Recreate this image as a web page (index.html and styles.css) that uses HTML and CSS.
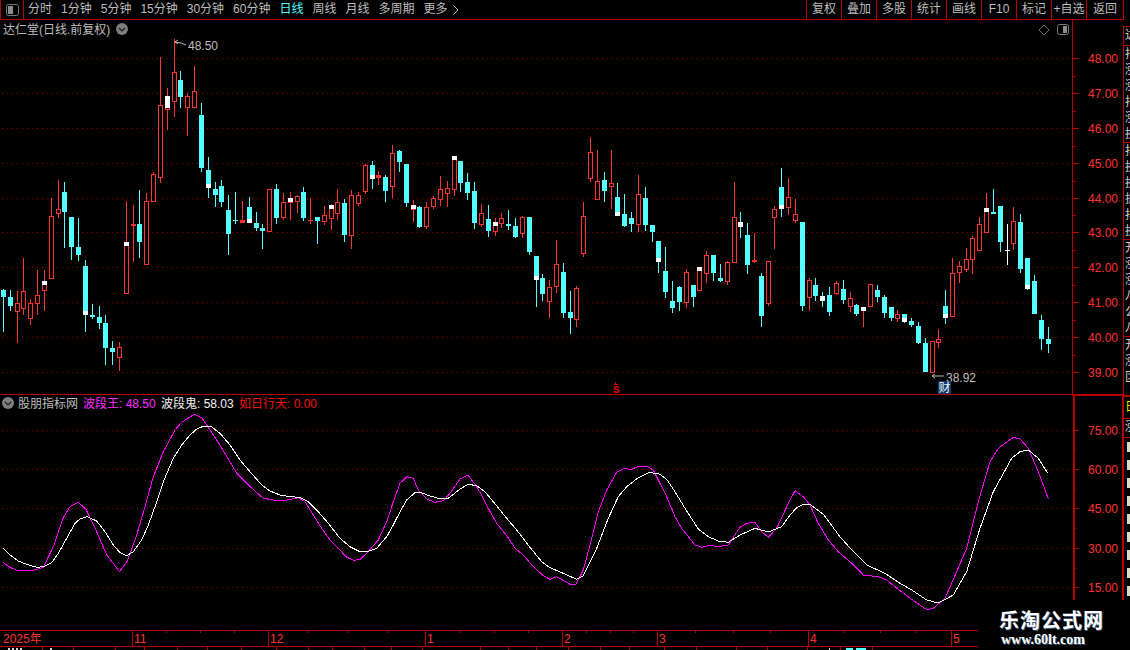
FILE: index.html
```html
<!DOCTYPE html>
<html lang="zh-CN">
<head>
<meta charset="utf-8">
<title>达仁堂 日线</title>
<link rel="stylesheet" href="styles.css">
</head>
<body>
<div class="app">
  <div class="main">
    <header class="toolbar">
      <button class="layout-btn" aria-label="布局">
        <svg class="layout-icon" width="13" height="12" viewBox="0 0 13 12"><rect x="0.5" y="0.5" width="12" height="11" rx="2" class="icon-frame"/><rect x="2" y="2" width="5" height="8" class="icon-fill"/></svg>
      </button>
      <nav class="periods">
        <span>分时</span><span>1分钟</span><span>5分钟</span><span>15分钟</span><span>30分钟</span><span>60分钟</span>
        <span class="active">日线</span><span>周线</span><span>月线</span><span>多周期</span>
        <span class="more">更多<svg class="chevron" width="6" height="10" viewBox="0 0 6 10"><path d="M0.5 0.5 L5 5 L0.5 9.5" /></svg></span>
      </nav>
      <div class="actions">
        <span>复权</span><span>叠加</span><span>多股</span><span>统计</span><span>画线</span><span class="f10">F10</span><span>标记</span><span>+自选</span><span class="last">返回</span>
      </div>
    </header>
    <svg id="plot" class="plot" width="1124" height="630" viewBox="0 20 1124 630">
      <g id="grid"></g>
      <g id="axes"></g>
      <g id="candles"></g>
      <g id="curves"></g>

      <text class="t-grey" x="3" y="34">达仁堂(日线.前复权)</text>
      <g class="round-icon" transform="translate(122 29)"><circle r="6"/><path d="M-3 -1 L0 2 L3 -1"/></g>
      <path class="diamond" d="M1044 25 L1049 30 L1044 35 L1039 30 Z"/>
      <rect class="toggle-frame" x="1057.5" y="24.5" width="11" height="10" rx="2"/>
      <rect class="toggle-fill" x="1063" y="26" width="4" height="7"/>

      <path class="marker" d="M175 42 L178 40 M175 42 L178 44 M175 42 L181 43 L186 45"/>
      <text class="t-grey" x="188" y="50">48.50</text>
      <path class="marker" d="M932 376 H944 M932 376 L935 374 M932 376 L935 378"/>
      <text class="t-grey" x="946" y="382">38.92</text>
      <rect class="badge" x="938" y="381" width="13" height="13"/>
      <text class="t-white" x="938.5" y="392">财</text>
      <path class="signal-cap" d="M615.5 382 V385 M614 384.5 H618"/>
      <text class="signal" x="613" y="393">S</text>

      <g class="round-icon" transform="translate(8 403)"><circle r="6"/><path d="M-3 -1 L0 2 L3 -1"/></g>
      <text class="t-grey" x="18" y="408">股朋指标网</text>
      <text class="t-magenta" x="83" y="408">波段王: 48.50</text>
      <text class="t-white" x="161" y="408">波段鬼: 58.03</text>
      <text class="t-red" x="239" y="408">如日行天: 0.00</text>

      <g class="t-axis">
        <text x="1088" y="63">48.00</text><text x="1088" y="98">47.00</text><text x="1088" y="133">46.00</text>
        <text x="1088" y="168">45.00</text><text x="1088" y="203">44.00</text><text x="1088" y="237">43.00</text>
        <text x="1088" y="272">42.00</text><text x="1088" y="307">41.00</text><text x="1088" y="342">40.00</text>
        <text x="1088" y="377">39.00</text>
        <text x="1088" y="435">75.00</text><text x="1088" y="474">60.00</text><text x="1088" y="513">45.00</text>
        <text x="1088" y="553">30.00</text><text x="1088" y="592">15.00</text>
        <text x="3" y="643">2025年</text><text x="134" y="643">11</text><text x="270" y="643">12</text>
        <text x="427" y="643">1</text><text x="564" y="643">2</text><text x="659" y="643">3</text>
        <text x="810" y="643">4</text><text x="953" y="643">5</text>
      </g>
    </svg>
  </div>
  <aside class="sidebar">
    <div class="side-group g1"><span>达</span></div>
    <div class="side-group g6"><span>排</span><span>涨</span><span>涨</span><span>排</span><span>涨</span><span>换</span></div>
    <div class="side-group g6"><span>排</span><span>换</span><span>换</span><span>振</span><span>排</span><span>换</span></div>
    <div class="side-group g6"><span>开</span><span>涨</span><span>涨</span><span>八</span><span>公</span><span>八</span></div>
    <div class="side-group g3"><span>开</span><span>涨</span><span>区</span></div>
    <div class="side-yellow"><span>日</span></div>
    <div class="side-group g1b"><span>涨</span></div>
    <div class="side-list"><i></i><i></i><i></i><i></i><i></i><i></i><i></i><i></i><i></i></div>
  </aside>
</div>
<div class="watermark">
  <div class="wm-title">乐淘公式网</div>
  <div class="wm-url">www.60lt.com</div>
</div>
<script src="chart.js"></script>
</body>
</html>
```

FILE: styles.css
```css
* { box-sizing: border-box; }
html, body { margin: 0; padding: 0; background: #000; }
body {
  position: relative;
  width: 1130px;
  height: 650px;
  overflow: hidden;
  font-family: "Liberation Sans", "Noto Sans CJK SC", sans-serif;
  font-size: 12px;
  color: #bdbdbd;
}
.app { display: flex; height: 650px; }
.main { width: 1124px; display: flex; flex-direction: column; }

/* toolbar */
.toolbar {
  display: flex;
  align-items: stretch;
  height: 20px;
  border-bottom: 1px solid #b80000;
}
.layout-btn {
  width: 24px;
  padding: 0;
  background: none;
  border: 0;
  border-left: 1px solid #b80000;
  border-right: 1px solid #b80000;
  display: flex;
  align-items: center;
  justify-content: center;
}
.icon-frame { fill: none; stroke: #7a7a7a; }
.icon-fill { fill: #8c8c8c; }
.periods {
  flex: 1;
  display: flex;
  align-items: center;
  gap: 9px;
  padding-left: 4px;
  line-height: 19px;
}
.periods .active { color: #54ffff; }
.more { display: flex; align-items: center; gap: 5px; }
.chevron path { fill: none; stroke: #bdbdbd; }
.actions { display: flex; }
.actions span {
  width: 35px;
  display: flex;
  align-items: center;
  justify-content: center;
  border-left: 1px solid #b80000;
  line-height: 19px;
  white-space: nowrap;
}
.actions .last { width: 38px; border-right: 1px solid #b80000; }

/* plot */
.plot { display: block; }
.plot text { font-size: 12px; font-family: "Liberation Sans", "Noto Sans CJK SC", sans-serif; }
.t-grey { fill: #bdbdbd; }
.t-white { fill: #f2f2f2; }
.t-magenta { fill: #ff2cff; }
.t-red { fill: #f01010; }
.t-axis { fill: #ff3232; }
.round-icon circle { fill: #7d7d7d; }
.round-icon path { fill: none; stroke: #1a1a1a; stroke-width: 1.2; }
.diamond { fill: none; stroke: #6e6e6e; }
.toggle-frame { fill: none; stroke: #7a7a7a; }
.toggle-fill { fill: #8c8c8c; }
.marker { fill: none; stroke: #b8b8b8; }
.badge { fill: #0c3a70; }
.signal-cap { fill: none; stroke: #f00000; shape-rendering: crispEdges; }
.plot .signal { fill: #f00000; font-family: "Liberation Mono", monospace; font-weight: 700; font-size: 11px; }
.dots { stroke: #a80000; stroke-dasharray: 1 4; shape-rendering: crispEdges; }
.rule { stroke: #b80000; shape-rendering: crispEdges; fill: none; }
.rule-bold { stroke: #b80000; stroke-width: 2; shape-rendering: crispEdges; fill: none; }
.c-red { fill: #000; stroke: #ff3232; shape-rendering: crispEdges; }
.w-red { fill: #ff3232; shape-rendering: crispEdges; }
.c-cyan, .w-cyan { fill: #54ffff; shape-rendering: crispEdges; }
.c-white { fill: #fff; shape-rendering: crispEdges; }
.line { fill: none; stroke-width: 1; shape-rendering: crispEdges; }
.line-m { stroke: #ff00ff; }
.line-w { stroke: #ffffff; }
.status-bit { fill: #d8d8d8; shape-rendering: crispEdges; }
.status-cyan { fill: #54ffff; shape-rendering: crispEdges; }

/* right side list, cropped by the window edge */
.sidebar {
  width: 6px;
  padding-top: 26px;
  overflow: hidden;
  display: flex;
  flex-direction: column;
  height: 600px;
  border-left: 0;
  color: #d0d0d0;
  box-shadow: inset 1px 0 0 #000;
}
.side-group, .side-yellow, .side-list { flex: none; display: flex; flex-direction: column; border-top: 1px solid #b80000; }
.side-group span, .side-yellow span {
  height: 16px;
  line-height: 16px;
  padding-left: 1px;
  white-space: nowrap;
}
.g1 { height: 19px; }
.g6 { height: 97px; }
.g3 { height: 59px; }
.side-yellow { height: 23px; border-top: 2px solid #b80000; color: #e6e600; padding-top: 2px; }
.g1b { height: 19px; }
.side-list { gap: 8px; padding-top: 4px; padding-left: 3px; }
.side-list i { display: block; width: 3px; height: 10px; background: #d8d8d8; }

/* watermark panel */
.watermark {
  position: absolute;
  left: 978px;
  top: 600px;
  width: 152px;
  height: 50px;
  background: #000;
  padding-left: 21px;
  padding-top: 8px;
  color: #fff;
  text-shadow: 1px 1px 0 #3a5a80;
}
.wm-title {
  font-family: "Noto Sans CJK SC", sans-serif;
  font-weight: 700;
  font-size: 20px;
  line-height: 24px;
  letter-spacing: 1px;
  white-space: nowrap;
}
.wm-url {
  font-family: "Liberation Serif", serif;
  font-weight: 700;
  font-size: 14px;
  line-height: 15px;
  margin-left: 2px;
  white-space: nowrap;
}
```

FILE: chart.js
```js
(function () {
  var NS = 'http://www.w3.org/2000/svg';
  function el(parent, name, attrs) {
    var n = document.createElementNS(NS, name);
    for (var k in attrs) n.setAttribute(k, attrs[k]);
    parent.appendChild(n);
    return n;
  }

  /* ---------- grid and axes (page coordinates) ---------- */
  var grid = document.getElementById('grid');
  [58, 93, 128, 163, 198, 232, 267, 302, 337, 372, 430, 469, 508, 548, 587].forEach(function (y) {
    el(grid, 'line', { 'class': 'dots', x1: 2, x2: 1072, y1: y + 0.5, y2: y + 0.5 });
  });

  var axes = document.getElementById('axes');
  function rule(x1, y1, x2, y2, cls) {
    el(axes, 'line', { 'class': cls || 'rule', x1: x1, y1: y1, x2: x2, y2: y2 });
  }
  rule(0, 394.5, 1072, 394.5);
  rule(1072, 395, 1123, 395, 'rule-bold');
  rule(1072.5, 20, 1072.5, 394);
  rule(1074, 395, 1074, 600, 'rule-bold');
  rule(1123, 395, 1123, 600, 'rule-bold');
  rule(1123.5, 26, 1123.5, 395);
  [58, 93, 128, 163, 198, 232, 267, 302, 337, 372, 430, 469, 508, 548, 587].forEach(function (y) {
    rule(1073, y + 0.5, 1079, y + 0.5);
  });
  [76, 111, 146, 181, 215, 250, 285, 320, 355, 449, 489, 528, 568].forEach(function (y) {
    rule(1073, y + 0.5, 1076, y + 0.5);
  });

  rule(0, 630.5, 978, 630.5);
  rule(0, 646.5, 978, 646.5);
  [132, 268, 425, 562, 657, 808, 951].forEach(function (x) { rule(x + 0.5, 630, x + 0.5, 646); });
  [166, 200, 234, 307, 347, 387, 459, 494, 528, 586, 610, 633, 695, 733, 770, 844, 880, 915].forEach(function (x) {
    rule(x + 0.5, 631, x + 0.5, 633);
  });
  [42, 73, 115, 144, 177, 207, 241, 276, 308, 332, 364, 391, 422, 480, 508, 536, 568, 600, 629, 664, 696, 736, 767, 807, 840, 872].forEach(function (x) {
    rule(x + 0.5, 647, x + 0.5, 650);
  });
  [[8, 2], [12, 2], [16, 2], [20, 2], [50, 2], [829, 1]].forEach(function (b) {
    el(axes, 'rect', { 'class': 'status-bit', x: b[0], y: 648, width: b[1], height: 2 });
  });
  el(axes, 'rect', { 'class': 'status-cyan', x: 846, y: 648, width: 7, height: 2 });
  el(axes, 'rect', { 'class': 'status-cyan', x: 856, y: 648, width: 10, height: 2 });

  /* ---------- candles ----------
     Each group: origin + [center, r|c|w, wickTop, wickBottom, bodyTop, bodyBottom, capTop?, capBottom?]
     values are in third-pixels relative to the origin. */
  var groups = [
    { ox: 0, oy: 120, d: [
      [10,'c',507,636,510,531],[31,'c',510,573,531,558],[52,'r',513,669,549,576],[70,'r',414,585,513,567],
      [91,'r',537,615,549,597],[112,'r',450,585,525,552],[133,'r',450,573,483,513,483,495],[154,'r',234,477,288,477],
      [175,'r',180,294,267,282],[193,'c',186,384,216,276],[214,'c',291,420,291,381],[235,'c',294,423,381,405],
      [256,'c',420,636,438,585,573,585],[277,'c',552,597,585,591],[298,'c',558,627,591,609],[316,'c',585,735,609,684],
      [337,'c',663,735,684,696],[358,'r',666,753,681,714],[379,'r',243,522,366,522,366,378],[400,'r',255,426,312,318],
      [418,'c',210,414,312,366],[439,'r',219,435,243,435],[460,'r',156,246,162,246],[481,'r',-188,189,-44,173],
      [502,'r',-95,30,-72,-31,-72,-36],[523,'r',-243,-10,-143,-55],[541,'c',-147,-35,-120,-70],[562,'r',-80,48,-71,-37],
      [583,'r',-162,-35,-86,-35],[604,'c',-50,156,-15,144],[625,'c',111,234,150,204,192,204],[646,'c',186,261,207,225],
      [664,'c',180,261,198,246],[685,'c',225,405,270,342],[706,'c',216,312,300,303],[727,'r',243,309,300,309],
      [748,'c',231,309,261,309,297,309],[769,'c',276,333,309,324],[787,'c',312,387,324,333],[808,'r',207,335,207,335]
    ]},
    { ox: 270, oy: 120, d: [
      [19,'c',192,312,207,294],[40,'r',219,300,246,294],[61,'r',216,300,234,249,234,246],[82,'r',225,279,228,246],
      [100,'c',201,303,216,294],[121,'r',234,312,300,303],[142,'c',291,372,291,303],[163,'r',258,315,285,306],
      [184,'r',252,330,255,297,255,267],[202,'r',207,300,246,282],[223,'c',237,366,249,345],[244,'r',210,387,225,348],
      [265,'r',216,258,225,252],[286,'r',132,222,135,216],[307,'c',123,207,135,177,165,177],[325,'r',153,195,165,174],
      [346,'c',165,246,171,213],[367,'r',75,234,99,201],[388,'c',90,156,93,126],[409,'c',132,261,132,249],
      [430,'r',240,306,255,270,255,267],[448,'c',258,324,261,321],[469,'r',246,327,261,321],[490,'r',228,267,234,261],
      [511,'r',168,258,207,240],[532,'r',183,261,204,222],[553,'r',108,228,108,210,108,120],[571,'c',123,216,123,189],
      [592,'c',159,240,186,219],[613,'c',186,327,213,309],[634,'r',252,321,279,315],[655,'c',255,351,297,333],
      [676,'r',294,348,306,336,306,318],[694,'r',279,324,294,312],[715,'c',270,330,312,318],[736,'c',294,354,318,351],
      [757,'r',288,354,291,342],[778,'c',291,405,291,396],[799,'c',408,561,408,480,468,480]
    ]},
    { ox: 540, oy: 120, d: [
      [7,'c',462,543,474,522],[28,'r',480,594,501,546],[49,'r',360,519,432,501],[70,'c',429,594,456,579],
      [91,'c',513,642,576,594],[109,'r',498,621,504,600],[130,'r',246,411,288,402],[151,'r',51,186,96,177],
      [172,'r',90,240,183,240],[193,'c',156,246,180,213],[214,'r',90,267,189,201],[232,'c',189,288,231,288,276,288],
      [253,'c',222,321,282,318],[274,'c',276,336,294,312],[295,'r',165,336,222,315],[316,'c',201,333,234,315],
      [337,'c',315,366,315,336],[355,'c',363,459,363,426,414,426],[376,'c',381,534,453,516],[397,'c',483,579,543,564],
      [418,'c',498,573,501,546],[439,'r',447,564,456,549],[460,'c',495,561,495,531],[478,'r',441,513,441,513,441,453],
      [499,'r',393,489,405,462],[520,'c',405,483,405,459],[541,'c',432,486,474,483],[562,'r',423,495,426,486],
      [583,'r',186,429,291,429],[601,'c',276,354,306,321,306,321],[622,'c',309,462,345,435],[643,'r',339,429,420,426],
      [664,'c',459,621,468,588],[685,'r',423,558,423,552],[703,'r',258,387,267,294],[724,'c',144,291,201,267,255,267],
      [745,'r',174,285,231,264],[766,'r',237,309,282,303]
    ]},
    { ox: 800, oy: 170, d: [
      [7,'c',156,423,156,408],[28,'r',324,423,330,384],[46,'c',324,393,345,378],[67,'c',366,411,378,393,378,393],
      [88,'c',351,438,375,426],[109,'r',333,375,339,372],[130,'c',330,402,357,390],[151,'r',366,426,384,411],
      [169,'c',402,438,405,432],[190,'r',411,471,411,423,411,423],[211,'r',342,411,342,411],[232,'c',345,396,360,381],
      [253,'c',375,444,381,429],[274,'c',411,453,411,444],[292,'r',420,456,432,447],[313,'c',432,459,432,456,444,456],
      [334,'c',444,471,453,465],[355,'c',456,522,468,519],[376,'c',504,606,519,606],[397,'r',513,609,513,609],
      [415,'r',477,534,507,519],[436,'c',360,462,408,444,432,444],[457,'r',264,441,309,441],[478,'r',273,339,288,309],
      [499,'r',234,306,267,300],[517,'r',198,312,204,270],[538,'r',141,243,162,243],[559,'r',69,189,114,189,114,126],
      [580,'c',57,132,126,132],[601,'c',108,246,108,216],[622,'w',162,285,240,243],[640,'r',111,240,153,222],
      [661,'c',132,309,156,297],[682,'c',264,360,264,357,345,357],[703,'c',315,432,333,432],[724,'c',435,540,450,507],
      [745,'c',471,549,507,522]
    ]}
  ];

  var candles = document.getElementById('candles');
  groups.forEach(function (g) {
    g.d.forEach(function (c) {
      var col = Math.floor(g.ox + c[0] / 3);
      var Y = function (z) { return Math.round(g.oy + z / 3); };
      var kind = c[1];
      var wt = Y(c[2]), wb = Y(c[3]), bt = Y(c[4]), bb = Y(c[5]);
      var wickCls = kind === 'r' ? 'w-red' : kind === 'c' ? 'w-cyan' : 'c-white';
      el(candles, 'rect', { 'class': wickCls, x: col, y: wt, width: 1, height: Math.max(wb - wt, 1) });
      if (kind === 'r') {
        if (bb - bt <= 3) {
          el(candles, 'rect', { 'class': 'w-red', x: col - 2, y: bt, width: 5, height: Math.max(bb - bt, 1) });
        } else {
          el(candles, 'rect', { 'class': 'c-red', x: col - 1.5, y: bt + 0.5, width: 4, height: bb - bt - 1 });
        }
      } else {
        el(candles, 'rect', { 'class': kind === 'c' ? 'c-cyan' : 'c-white', x: col - 2, y: bt, width: 5, height: Math.max(bb - bt, 1) });
      }
      if (c.length > 6) {
        el(candles, 'rect', { 'class': 'c-white', x: col - 2, y: Y(c[6]), width: 5, height: Y(c[7]) - Y(c[6]) });
      }
    });
  });

  /* ---------- indicator curves ---------- */
  function map(list, ox, oy) {
    return list.map(function (p) { return (ox + p[0] / 3).toFixed(1) + ',' + (oy + p[1] / 3).toFixed(1); }).join(' ');
  }
  var magenta = [
    map([[10,533],[30,547],[50,556],[100,556],[130,547],[160,485],[190,398],[210,365],[235,352],[258,373],[290,440],[320,510],[340,535],[358,560],[382,528],[410,450],[435,365],[460,275],[490,200],[525,135],[545,112],[583,88],[605,98],[630,135],[660,180],[690,230],[710,265],[740,295],[765,318],[790,340],[820,345],[860,345],[895,338],[915,350],[940,390],[965,430],[990,465],[1015,490],[1040,517],[1062,526],[1080,523],[1100,505],[1135,465],[1160,410],[1180,350],[1200,295]], 0, 385),
    map([[20,275],[40,280],[55,315],[80,342],[105,352],[130,347],[150,325],[180,282],[203,270],[225,298],[245,330],[265,370],[290,415],[325,458],[345,490],[370,510],[395,540],[430,572],[450,583],[470,575],[510,598],[528,598],[550,555],[570,480],[595,380],[620,315],[650,262],[670,251],[695,253],[715,244],[740,244],[760,255],[775,285],[800,335],[825,395],[845,430],[885,480],[905,487],[925,482],[960,484],[985,480],[1020,427],[1040,415],[1065,412],[1085,440],[1105,457],[1130,430],[1170,345]], 400, 385),
    map([[15,317],[40,335],[60,360],[85,415],[115,465],[145,500],[185,535],[220,570],[265,575],[290,585],[330,617],[375,650],[410,674],[430,670],[465,640],[500,560],[530,490],[565,350],[600,230],[625,190],[670,157],[690,162],[715,190],[745,260],[775,342]], 790, 385)
  ].join(' ');
  var white = [
    map([[10,490],[30,510],[55,528],[80,538],[110,547],[130,545],[155,533],[175,505],[200,460],[225,415],[240,402],[262,395],[290,408],[315,440],[340,480],[360,503],[380,512],[400,500],[425,465],[445,420],[465,365],[490,290],[520,220],[545,180],[570,150],[590,132],[610,124],[635,126],[660,145],[690,180],[720,225],[750,260],[785,300],[810,318],[840,330],[870,335],[900,337],[925,350],[950,375],[985,415],[1020,460],[1050,485],[1080,500],[1100,501],[1130,490],[1160,455],[1180,420],[1200,380]], 0, 385),
    map([[20,345],[45,323],[60,322],[90,333],[115,340],[145,340],[180,312],[205,298],[230,302],[255,320],[280,350],[320,400],[350,435],[390,487],[425,530],[450,548],[490,565],[530,583],[550,572],[590,490],[625,400],[655,335],[680,305],[715,278],[745,263],[775,265],[800,283],[825,320],[855,370],[895,432],[925,455],[955,468],[985,472],[1020,450],[1065,430],[1105,441],[1145,425],[1170,390]], 400, 385),
    map([[20,368],[40,358],[60,358],[100,388],[150,455],[185,495],[230,540],[285,565],[330,595],[365,615],[410,645],[445,654],[490,630],[530,560],[570,430],[610,320],[665,220],[690,200],[715,195],[745,220],[773,265]], 790, 385)
  ].join(' ');
  var curves = document.getElementById('curves');
  el(curves, 'polyline', { 'class': 'line line-m', points: magenta });
  el(curves, 'polyline', { 'class': 'line line-w', points: white });
})();
```
